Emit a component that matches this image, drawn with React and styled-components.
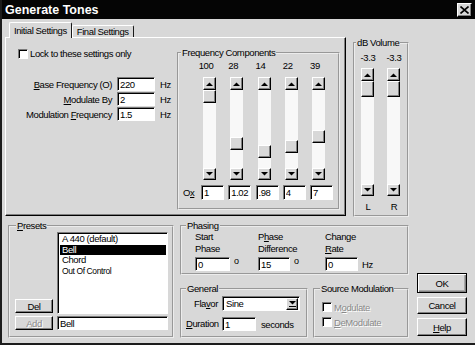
import React from 'react'
import styled, { createGlobalStyle, css } from 'styled-components'

const GlobalStyle = createGlobalStyle`
  html, body { margin: 0; padding: 0; background: #d8d8d8; }
  body {
    font-family: "Liberation Sans", Arial, sans-serif;
    font-size: 9.5px;
    letter-spacing: -0.4px;
    color: #000;
  }
  * { box-sizing: border-box; }
`

const freqComponents = [
  { label: '100', value: '1', pos: 0 },
  { label: '28', value: '1.02', pos: 47 },
  { label: '14', value: '.98', pos: 55 },
  { label: '22', value: '4', pos: 50 },
  { label: '39', value: '7', pos: 40 },
]

const presets = [
  { name: 'A 440 (default)' },
  { name: 'Bell', selected: true },
  { name: 'Chord' },
  { name: 'Out Of Control', small: true },
]

//============ shared bits

const raised = css`
  background: #d8d8d8;
  border: 1px solid;
  border-color: #fff #000 #000 #fff;
  box-shadow: inset -1px -1px 0 #808080;
`

const sunken = css`
  background: #fff;
  border: 1px solid;
  border-color: #7a7a7a #fff #fff #7a7a7a;
  box-shadow: inset 1px 1px 0 #000;
`

const disabledText = css`
  color: #8a8a8a;
  text-shadow: 1px 1px 0 #fff;
`

function Arrow({ dir, bar }) {
  return (
    <svg width="7" height={bar ? 6 : 4} viewBox={`0 0 7 ${bar ? 6 : 4}`}>
      {dir === 'up'
        ? <polygon points="0,4 3.5,0.5 7,4" fill="#000" />
        : <polygon points="0,0 7,0 3.5,3.5" fill="#000" />}
      {bar && <rect x="0" y="5" width="7" height="1" fill="#000" />}
    </svg>
  )
}

function Slider({ height, thumbTop, thumbHeight }) {
  return (
    <Track $h={height}>
      <ArrowBtn $h={13}><Arrow dir="up" /></ArrowBtn>
      <TrackBody>
        <Thumb $h={thumbHeight} style={{ top: thumbTop }} />
      </TrackBody>
      <ArrowBtn $h={12}><Arrow dir="down" /></ArrowBtn>
    </Track>
  )
}

function App() {
  return (
    <>
      <GlobalStyle />
      <Window>
        <TitleBar>
          <Title>Generate Tones</Title>
          <CloseBox>
            <svg width="9" height="8" viewBox="0 0 9 8">
              <path d="M0.5 0.5 L8.5 7.5 M8.5 0.5 L0.5 7.5" stroke="#000" strokeWidth="1.6" />
            </svg>
          </CloseBox>
        </TitleBar>

        <TopRow>
          <TabArea>
            <TabStrip>
              <Tab $active>Initial Settings</Tab>
              <Tab>Final Settings</Tab>
            </TabStrip>
            <TabPanel>
              <LeftPane>
                <CheckRow>
                  <CheckBox />
                  <span>Lock to these settings only</span>
                </CheckRow>
                <FormGrid>
                  <FormLabel><u>B</u>ase Frequency (O)</FormLabel>
                  <Field $w={38} defaultValue="220" />
                  <span>Hz</span>
                  <FormLabel><u>M</u>odulate By</FormLabel>
                  <Field $w={38} defaultValue="2" />
                  <span>Hz</span>
                  <FormLabel>Modulation <u>F</u>requency</FormLabel>
                  <Field $w={38} defaultValue="1.5" />
                  <span>Hz</span>
                </FormGrid>
              </LeftPane>

              <FreqGroup>
                <Legend $indent={2}>Frequency Components</Legend>
                <FreqGrid>
                  <span />
                  {freqComponents.map(f => <ColLabel key={'l' + f.label}>{f.label}</ColLabel>)}
                  <span />
                  {freqComponents.map(f => (
                    <SliderCell key={'s' + f.label}>
                      <Slider height={103} thumbTop={f.pos} thumbHeight={13} />
                    </SliderCell>
                  ))}
                  <OxLabel>O<u>x</u></OxLabel>
                  {freqComponents.map(f => <Field key={'v' + f.label} $w={23} $h={15} defaultValue={f.value} />)}
                </FreqGrid>
              </FreqGroup>
            </TabPanel>
          </TabArea>

          <VolumeGroup>
            <Legend $indent={1}>dB Volume</Legend>
            <VolGrid>
              <VolLabel>-3.3</VolLabel>
              <VolLabel>-3.3</VolLabel>
              <Slider height={128} thumbTop={0} thumbHeight={16} />
              <Slider height={128} thumbTop={0} thumbHeight={16} />
              <VolLabel>L</VolLabel>
              <VolLabel>R</VolLabel>
            </VolGrid>
          </VolumeGroup>
        </TopRow>

        <BottomRow>
          <PresetsGroup>
            <Legend $indent={6}><u>P</u>resets</Legend>
            <PresetGrid>
              <DelButton>Del</DelButton>
              <ListBox>
                {presets.map(p => (
                  <ListItem key={p.name} $selected={p.selected} $small={p.small}>{p.name}</ListItem>
                ))}
              </ListBox>
              <PushButton $h={14} disabled>Add</PushButton>
              <Field $w={111} defaultValue="Bell" />
            </PresetGrid>
          </PresetsGroup>

          <MiddleCol>
            <PhasingGroup>
              <Legend $indent={4}>Phasing</Legend>
              <PhaseGrid>
                <PhaseField>
                  <Caption>Start<br />Phase</Caption>
                  <UnitRow>
                    <Field $w={35} defaultValue="0" />
                    <Degree>o</Degree>
                  </UnitRow>
                </PhaseField>
                <PhaseField>
                  <Caption>P<u>h</u>ase<br />Difference</Caption>
                  <UnitRow>
                    <Field $w={32} defaultValue="15" />
                    <Degree>o</Degree>
                  </UnitRow>
                </PhaseField>
                <PhaseField>
                  <Caption>Change<br /><u>R</u>ate</Caption>
                  <UnitRow>
                    <Field $w={33} defaultValue="0" />
                    <Unit>Hz</Unit>
                  </UnitRow>
                </PhaseField>
              </PhaseGrid>
            </PhasingGroup>

            <SubRow>
              <GeneralGroup>
                <Legend $indent={4}>General</Legend>
                <GeneralGrid>
                  <FormLabel>Fla<u>v</u>or</FormLabel>
                  <Combo>
                    <span>Sine</span>
                    <ComboButton><Arrow dir="down" bar /></ComboButton>
                  </Combo>
                  <FormLabel><u>D</u>uration</FormLabel>
                  <UnitRow>
                    <Field $w={34} defaultValue="1" />
                    <Unit $gap={5}>seconds</Unit>
                  </UnitRow>
                </GeneralGrid>
              </GeneralGroup>

              <SourceGroup>
                <Legend $indent={5}>Source Modulation</Legend>
                <CheckList>
                  <CheckRow $disabled>
                    <CheckBox />
                    <span>M<u>o</u>dulate</span>
                  </CheckRow>
                  <CheckRow $disabled>
                    <CheckBox />
                    <span><u>D</u>eModulate</span>
                  </CheckRow>
                </CheckList>
              </SourceGroup>
            </SubRow>
          </MiddleCol>

          <ButtonCol>
            <PushButton $h={20} $default>OK</PushButton>
            <PushButton $h={17}>Cancel</PushButton>
            <PushButton $h={18}><u>H</u>elp</PushButton>
          </ButtonCol>
        </BottomRow>
      </Window>
    </>
  )
}

export default App

//============ window

const Window = styled.div`
  width: 475px;
  height: 345px;
  background: #d8d8d8;
  border-left: 2px solid #1c1c1c;
  border-bottom: 2px solid #1c1c1c;
  display: flex;
  flex-direction: column;
  overflow: hidden;
`

const TitleBar = styled.div`
  height: 19px;
  background: #050505;
  display: flex;
  align-items: center;
  justify-content: space-between;
  padding: 0 3px 0 3px;
`

const Title = styled.div`
  color: #fff;
  font-size: 12.5px;
  font-weight: bold;
  letter-spacing: 0;
`

const CloseBox = styled.div`
  ${raised};
  width: 15px;
  height: 14px;
  display: flex;
  align-items: center;
  justify-content: center;
`

//============ top part

const TopRow = styled.div`
  display: flex;
  height: 195px;
  margin-top: 3px;
  padding-left: 3px;
`

const TabArea = styled.div`
  width: 341px;
  display: flex;
  flex-direction: column;
`

const TabStrip = styled.div`
  display: flex;
  align-items: flex-end;
  height: 15px;
  padding-left: 4px;
`

const Tab = styled.div`
  position: relative;
  z-index: ${p => (p.$active ? 1 : 0)};
  height: ${p => (p.$active ? 16 : 12)}px;
  margin-bottom: ${p => (p.$active ? -1 : 0)}px;
  padding: 0 4px;
  display: flex;
  align-items: center;
  background: #d8d8d8;
  border: 1px solid;
  border-color: #fff #1a1a1a transparent #fff;
  border-bottom: none;
  border-radius: 2px 2px 0 0;
  white-space: nowrap;
`

const TabPanel = styled.div`
  height: 179px;
  display: flex;
  align-items: flex-start;
  padding-top: 9px;
  border: 1px solid;
  border-color: #fff #000 #000 #fff;
  box-shadow: inset -1px -1px 0 #808080;
`

const LeftPane = styled.div`
  width: 171px;
  display: flex;
  flex-direction: column;
`

const CheckRow = styled.label`
  display: flex;
  align-items: center;
  gap: 2px;
  height: ${p => (p.$disabled ? 10 : 11)}px;
  margin-top: ${p => (p.$disabled ? 0 : 1)}px;
  padding-left: ${p => (p.$disabled ? 0 : 12)}px;
  white-space: nowrap;
  ${p => p.$disabled && disabledText};
`

const CheckBox = styled.span`
  ${sunken};
  width: 10px;
  height: 10px;
  flex: none;
`

const FormGrid = styled.div`
  display: grid;
  grid-template-columns: 106px 38px auto;
  column-gap: 5px;
  row-gap: 1px;
  align-items: center;
  margin-top: 18px;
`

const FormLabel = styled.span`
  text-align: right;
  white-space: nowrap;
`

const Field = styled.input`
  ${sunken};
  width: ${p => p.$w}px;
  height: ${p => p.$h || 14}px;
  margin: 0;
  padding: 0 0 0 2px;
  font: inherit;
  letter-spacing: -0.4px;
  color: #000;
  outline: none;
`

//============ group boxes

const groupBox = css`
  margin: 0;
  padding: 0;
  min-width: 0;
  border: 2px groove #ececec;
`

const Legend = styled.legend`
  padding: 0 1px;
  margin-left: ${p => p.$indent}px;
  line-height: 11px;
  white-space: nowrap;
`

const FreqGroup = styled.fieldset`
  ${groupBox};
  width: 163px;
  height: 163px;
`

const FreqGrid = styled.div`
  display: grid;
  grid-template-columns: 18px repeat(5, 27.25px);
  grid-template-rows: 12px 103px 15px;
  row-gap: 5px;
  padding: 2px 0 0 4px;
`

const ColLabel = styled.span`
  width: 20px;
  margin-left: -5px;
  text-align: center;
`

const SliderCell = styled.div`
  padding-left: 2px;
`

const OxLabel = styled.span`
  align-self: center;
`

const Track = styled.div`
  width: 13px;
  height: ${p => p.$h}px;
  display: flex;
  flex-direction: column;
  background: #f8f8f8;
`

const ArrowBtn = styled.div`
  ${raised};
  height: ${p => p.$h}px;
  flex: none;
  display: flex;
  align-items: center;
  justify-content: center;
`

const TrackBody = styled.div`
  position: relative;
  flex: 1;
`

const Thumb = styled.div`
  ${raised};
  position: absolute;
  left: 0;
  width: 13px;
  height: ${p => p.$h}px;
`

const VolumeGroup = styled.fieldset`
  ${groupBox};
  width: 56px;
  height: 180px;
  margin-left: 7px;
  margin-top: 15px;
`

const VolGrid = styled.div`
  display: grid;
  grid-template-columns: 26px 26px;
  grid-template-rows: 11px 128px 11px;
  row-gap: 5px;
  padding: 4px 0 0 6px;
`

const VolLabel = styled.span`
  width: 20px;
  margin-left: -3px;
  text-align: center;
  line-height: 11px;
`

//============ bottom part

const BottomRow = styled.div`
  display: flex;
  height: 118px;
  margin-top: 3px;
  padding-left: 6px;
`

const PresetsGroup = styled.fieldset`
  ${groupBox};
  width: 166px;
  height: 118px;
`

const PresetGrid = styled.div`
  display: grid;
  grid-template-columns: 38px 111px;
  grid-template-rows: 82px 14px;
  column-gap: 4px;
  row-gap: 2px;
  padding: 1px 0 0 5px;
`

const ListBox = styled.div`
  ${sunken};
  padding: 1px 1px 0 2px;
  display: flex;
  flex-direction: column;
`

const ListItem = styled.div`
  height: 10.5px;
  line-height: 10.5px;
  padding-left: 2px;
  font-size: ${p => (p.$small ? 8.5 : 9.5)}px;
  white-space: nowrap;
  ${p => p.$selected && css`
    background: #000;
    color: #fff;
  `};
`

const PushButton = styled.button`
  ${raised};
  height: ${p => p.$h}px;
  margin: 0;
  padding: 0;
  font: inherit;
  letter-spacing: -0.4px;
  color: #000;
  ${p => p.$default && css`
    border-color: #000;
    box-shadow: inset 1px 1px 0 #fff, inset -1px -1px 0 #808080, inset -2px -2px 0 #a8a8a8;
  `};
  &:disabled {
    ${disabledText};
  }
`

const DelButton = styled(PushButton)`
  height: 14px;
  align-self: end;
  margin-bottom: 1px;
`

const MiddleCol = styled.div`
  width: 229px;
  margin-left: 6px;
  display: flex;
  flex-direction: column;
`

const PhasingGroup = styled.fieldset`
  ${groupBox};
  width: 229px;
  height: 55px;
`

const PhaseGrid = styled.div`
  display: grid;
  grid-template-columns: 63px 67px auto;
  padding-left: 13px;
`

const PhaseField = styled.div`
  display: flex;
  flex-direction: column;
`

const Caption = styled.div`
  line-height: 12px;
  white-space: nowrap;
`

const UnitRow = styled.div`
  display: flex;
  align-items: flex-start;
  margin-top: 2px;
`

const Degree = styled.span`
  margin-left: 4px;
  font-size: 9px;
  line-height: 8px;
`

const Unit = styled.span`
  margin-left: ${p => p.$gap || 4}px;
  align-self: center;
  white-space: nowrap;
`

const SubRow = styled.div`
  display: flex;
  gap: 5px;
  margin-top: 8px;
`

const GeneralGroup = styled.fieldset`
  ${groupBox};
  width: 128px;
  height: 55px;
`

const GeneralGrid = styled.div`
  display: grid;
  grid-template-columns: 32px auto;
  grid-template-rows: 15px 14px;
  column-gap: 4px;
  row-gap: 5px;
  align-items: center;
  padding: 2px 0 0 4px;
`

const Combo = styled.div`
  ${sunken};
  width: 78px;
  height: 15px;
  display: flex;
  align-items: center;
  justify-content: space-between;
  padding: 1px 1px 1px 3px;
`

const ComboButton = styled.div`
  ${raised};
  width: 12px;
  height: 12px;
  display: flex;
  align-items: center;
  justify-content: center;
`

const SourceGroup = styled.fieldset`
  ${groupBox};
  width: 96px;
  height: 55px;
`

const CheckList = styled.div`
  display: flex;
  flex-direction: column;
  gap: 5px;
  padding: 8px 0 0 7px;
`

const ButtonCol = styled.div`
  width: 50px;
  margin-left: 8px;
  margin-top: 53px;
  display: flex;
  flex-direction: column;
  gap: 4px;
`
